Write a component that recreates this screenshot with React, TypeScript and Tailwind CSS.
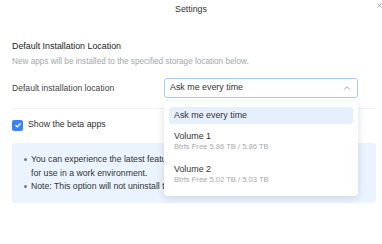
import { ChevronUp } from 'lucide-react';

const volumes = [
    { name: 'Volume 1', info: 'Btrfs Free 5.86 TB / 5.86 TB' },
    { name: 'Volume 2', info: 'Btrfs Free 5.02 TB / 5.03 TB' },
];

export default function App() {
    return (
        <div className="relative h-[244px] w-[382px] overflow-hidden bg-white font-['Liberation_Sans',Arial,sans-serif] text-[#333]">
            <div className="flex h-[20px] items-center justify-center text-[8.8px] text-[#333]">Settings</div>
            <button className="absolute right-[0px] top-[2px] flex h-[6px] w-[6px] items-center justify-center">
                <svg width="5" height="5" viewBox="0 0 5 5" stroke="#9a9a9a" strokeWidth="0.8">
                    <path d="M0.5 0.5 L4.5 4.5 M4.5 0.5 L0.5 4.5" />
                </svg>
            </button>

            <div className="pl-[12px] pr-[6px]">
                <h2 className="mt-[20px] text-[8.9px] font-medium leading-[12px] text-[#222]">
                    Default Installation Location
                </h2>
                <p className="mt-[4px] text-[8.2px] leading-[12px] text-[#a3a7ad]">
                    New apps will be installed to the specified storage location below.
                </p>

                <div className="mt-[10px] flex items-center">
                    <span className="w-[152px] text-[8.6px] text-[#444]">Default installation location</span>
                    <div className="flex h-[20px] w-[194px] items-center justify-between rounded-[3px] border border-[#a9cbfa] pl-[5px] pr-[5px] text-[8.9px] text-[#333]">
                        <span>Ask me every time</span>
                        <ChevronUp size={10} strokeWidth={1.6} className="text-[#777]" />
                    </div>
                </div>

                <div className="mt-[10px] border-t border-[#f2f2f2]" />

                <label className="mt-[10px] flex h-[12px] items-center gap-[5px]">
                    <span className="flex h-[11px] w-[11px] items-center justify-center rounded-[2px] bg-[#3a84f5]">
                        <svg width="8" height="8" viewBox="0 0 8 8" fill="none" stroke="white" strokeWidth="1.3">
                            <path d="M1.5 4.2 L3.3 5.9 L6.6 2.2" />
                        </svg>
                    </span>
                    <span className="text-[8.8px] text-[#333]">Show the beta apps</span>
                </label>

                <div className="mt-[12px] h-[60px] rounded-[3px] bg-[#eaf3fe] pl-[12px] pr-[8px] pt-[10px] text-[8.7px] leading-[13.5px] text-[#333]">
                    <div className="flex">
                        <span className="mr-[4px] mt-[5px] h-[3px] w-[3px] shrink-0 rounded-full bg-[#777]" />
                        <span>
                            You can experience the latest features of beta apps, but they may not be stable
                            <br />
                            for use in a work environment.
                        </span>
                    </div>
                    <div className="flex">
                        <span className="mr-[4px] mt-[5px] h-[3px] w-[3px] shrink-0 rounded-full bg-[#777]" />
                        <span>Note: This option will not uninstall the beta apps already installed.</span>
                    </div>
                </div>
            </div>

            <div className="absolute left-[164px] top-[102px] w-[194px] rounded-[4px] bg-white p-[5px] shadow-[0_2px_8px_rgba(0,0,0,0.13)]">
                <div className="flex h-[17px] items-center rounded-[3px] bg-[#e6f0fd] px-[5px] text-[8.9px] text-[#333]">
                    Ask me every time
                </div>
                {volumes.map((v) => (
                    <div key={v.name} className="h-[33.6px] px-[5px] pt-[5.5px]">
                        <div className="text-[8.9px] leading-[12px] text-[#333]">{v.name}</div>
                        <div className="mt-[-1px] text-[7.6px] leading-[12px] text-[#a6a9ae]">{v.info}</div>
                    </div>
                ))}
            </div>
        </div>
    );
}
